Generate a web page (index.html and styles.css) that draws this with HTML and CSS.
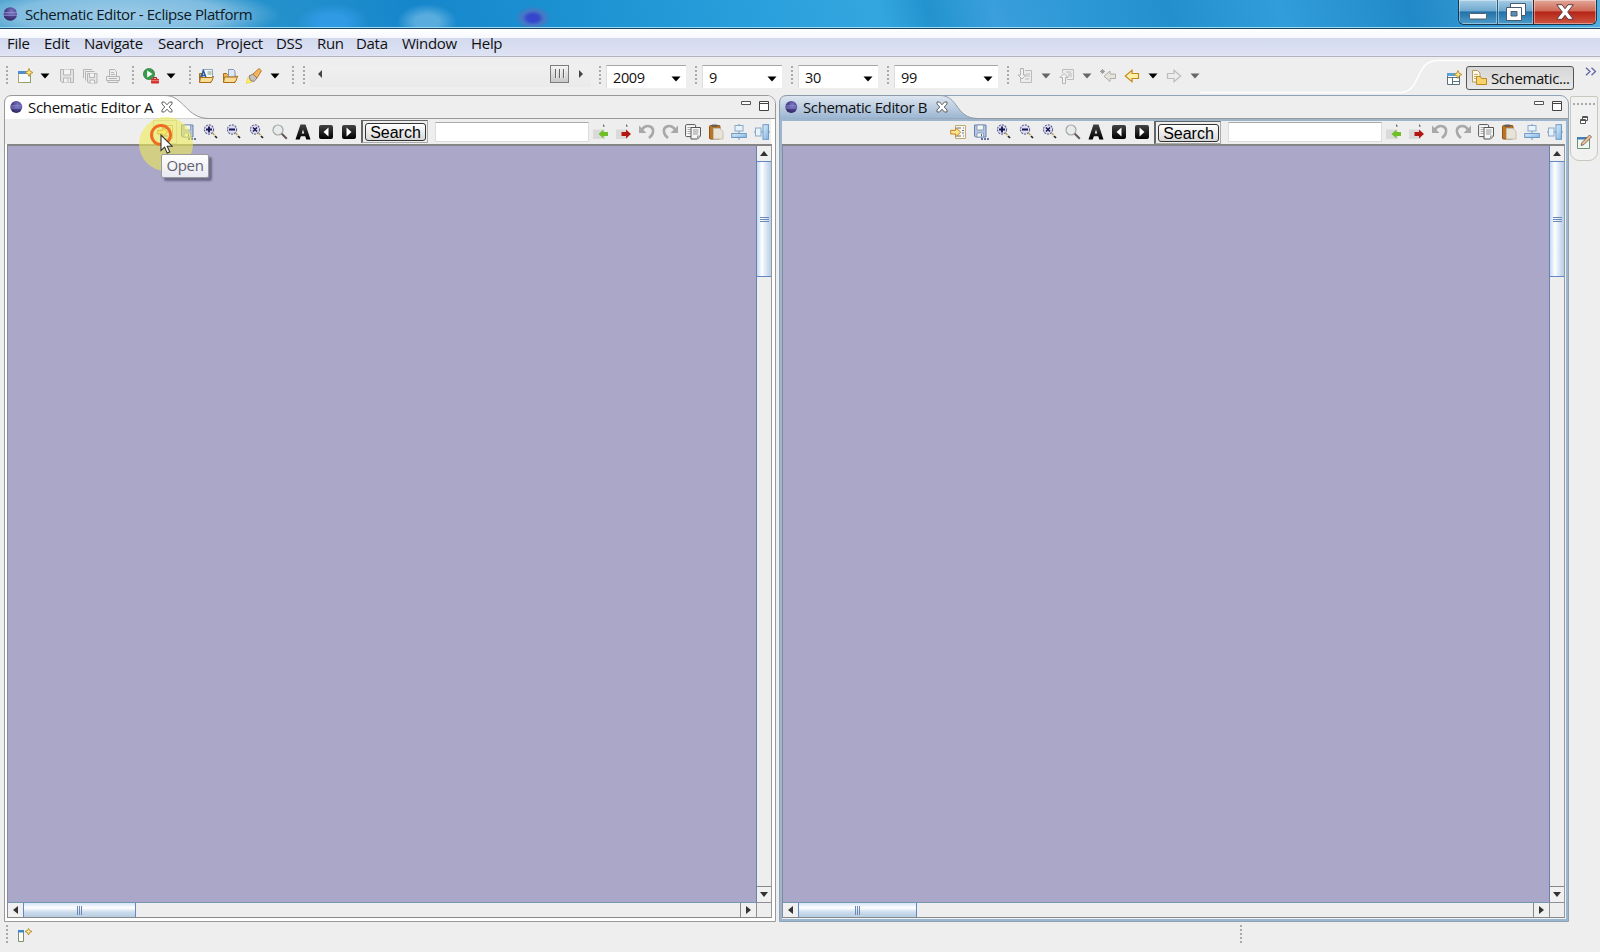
FILE: index.html
```html
<!DOCTYPE html>
<html lang="en">
<head>
<meta charset="utf-8">
<title>Schematic Editor - Eclipse Platform</title>
<link rel="stylesheet" href="styles.css">
</head>
<body>
<svg class="sprite" width="0" height="0">
  <defs>
    <radialGradient id="orb" cx=".6" cy=".3" r=".8"><stop offset="0" stop-color="#7a78c0"/><stop offset=".5" stop-color="#4a428c"/><stop offset="1" stop-color="#2b2158"/></radialGradient>
    <linearGradient id="blk" x1="0" y1="0" x2="0" y2="1"><stop offset="0" stop-color="#444"/><stop offset="1" stop-color="#000"/></linearGradient>
    <linearGradient id="blu" x1="0" y1="0" x2="1" y2="1"><stop offset="0" stop-color="#dff0fc"/><stop offset="1" stop-color="#7fb2e0"/></linearGradient>
  </defs>
  <symbol id="eclipse" viewBox="0 0 16 16"><circle cx="8.300" cy="8" r="6.800" fill="url(#orb)"/><path d="M1 6.800h14.500M1 9.200h14.500" stroke="#a9a8ea" stroke-width=".8"/></symbol>
  <symbol id="caret" viewBox="0 0 10 6"><path d="M.5.5h9L5 5.5z" fill="currentColor"/></symbol>
  <symbol id="new" viewBox="0 0 16 16"><rect x="1.500" y="3.500" width="12" height="11" fill="#f4fafe" stroke="#b5a265"/><path d="M1 3h9v3H1z" fill="#4a90d0"/><path d="M13.500 6.500v8h-8" fill="none" stroke="#8da06a"/><path d="M12 .5l1.200 2.800L16 4.500l-2.800 1.200L12 8.500l-1.200-2.800L8 4.500l2.800-1.200z" fill="#fbe48a" stroke="#b98d1d" stroke-width=".9"/></symbol>
  <symbol id="save-off" viewBox="0 0 16 16"><path d="M1.500 1.500h13v13H3l-1.500-1.500z" fill="#e3e3e3" stroke="#b5b5b5"/><path d="M4.500 1.500v5.500h7V1.500M4.500 14.500v-4.500h7v4.500M9 11v3" fill="#f3f3f3" stroke="#b5b5b5"/></symbol>
  <symbol id="saveall-off" viewBox="0 0 16 16"><path d="M1.500 10V1.500H10M3.500 12.500v-9h9" fill="none" stroke="#b5b5b5"/><path d="M5.500 5.500h9.500v9.500H6.500l-1-1z" fill="#e6e6e6" stroke="#b5b5b5"/><path d="M7.500 5.500v4h5v-4M8 15v-3h4.500v3" fill="#f3f3f3" stroke="#b5b5b5"/></symbol>
  <symbol id="print-off" viewBox="0 0 16 16"><path d="M4.500 8V1.500h5l2 2V8M1.500 8.500h13v4h-13zM3 12.500h10v2H3z" fill="#ededed" stroke="#b5b5b5"/><path d="M6 4.500h3M6 6.500h4M4 10.500h8" stroke="#b5b5b5"/></symbol>
  <symbol id="run" viewBox="0 0 16 16"><circle cx="6" cy="6" r="5.600" fill="#3a9a4b" stroke="#1d6d31" stroke-width=".6"/><path d="M4.200 2.600v6.800L9.500 6z" fill="#fff"/><path d="M10.500 11V9.500h3V11" fill="none" stroke="#a92020"/><rect x="8" y="10.800" width="8" height="4.700" rx=".8" fill="#d22d2a"/><path d="M8 12.700h8" stroke="#f0b0a0" stroke-width=".7"/></symbol>
  <symbol id="open-type" viewBox="0 0 16 16"><path d="M1.500 14V5.500h3l1 1H13v8H2z" fill="#eab65a" stroke="#a86d16"/><path d="M4.500 1.500h10v8h-10z" fill="#f4f8ff" stroke="#8ba4c6"/><path d="M9.500 4h4M9.500 6h4" stroke="#7ba06a"/><path d="M2.500 9.500l3-6.500 2.500 6.500M3.500 7.500h4" stroke="#24589c" stroke-width="1.500" fill="none"/><path d="M1.500 14.500l1-5h11.500l1.500-1.500-1.500 5-2 1.500z" fill="#fbdc94" stroke="#a86d16"/></symbol>
  <symbol id="open-res" viewBox="0 0 16 16"><path d="M1.500 14V5.500h3l1 1H13v8H2z" fill="#eab65a" stroke="#a86d16"/><path d="M6.500 1.500h5l1.500 1.500v6H6.500z" fill="#dfe8f6" stroke="#8795b3"/><path d="M1.500 14.500l1-5.500h11.500l1.500-1-1.500 5-2 1.500z" fill="#fbdc94" stroke="#a86d16"/></symbol>
  <symbol id="torch" viewBox="0 0 16 16"><path d="M0 15.500l2-6 4.500 4.500z" fill="#fff15c" stroke="#e9cf49" stroke-width=".7"/><path d="M3 8l4-2 4 4-3 3.500-3.500-1z" fill="#c8c0bd" stroke="#827477" stroke-width=".9"/><path d="M7 6l6-5.500 2.500 2.200L11 10z" fill="#f1b45f" stroke="#b57428" stroke-width=".9"/></symbol>
  <symbol id="step-in" viewBox="0 0 16 16"><path d="M8 2.500h6.500v12h-11V10" fill="#ececec" stroke="#bcbcbc"/><path d="M9 6h4M9 8h4M8 11h4" stroke="#bcbcbc"/><path d="M3.500.5h3v6.500H9l-4 4-4-4h2.500z" fill="#f1f1f1" stroke="#b3b3b3"/></symbol>
  <symbol id="step-out" viewBox="0 0 16 16"><path d="M3.500 5V1.500h11v10H8" fill="#ececec" stroke="#bcbcbc"/><path d="M7 4h5M9 6h4M9 8h4" stroke="#bcbcbc"/><path d="M3.500 15.500h3v-6H9l-4-4-4 4h2.500z" fill="#f1f1f1" stroke="#b3b3b3"/></symbol>
  <symbol id="last-edit" viewBox="0 0 16 16"><path d="M15.500 6H10V3L4 8.300l6 5.200v-3h5.500z" fill="#e4e4dc" stroke="#b0b0a8"/><path d="M2.500 1v5M0 3.500h5M.8 1.800l3.400 3.400M4.200 1.800L.8 5.200" stroke="#969696" stroke-width=".9"/></symbol>
  <symbol id="back" viewBox="0 0 16 16"><path d="M14.500 5.500H8V2.300L1.300 8 8 13.700v-3.200h6.500z" fill="#fff0a8" stroke="#c28b20" stroke-width="1.200"/></symbol>
  <symbol id="fwd-off" viewBox="0 0 16 16"><path d="M1.500 5.500H8V2.300L14.700 8 8 13.700v-3.200H1.500z" fill="#ececec" stroke="#bcbcbc" stroke-width="1.200"/></symbol>
  <symbol id="persp" viewBox="0 0 16 16"><path d="M1.500 3.500h12v11h-12zM1.500 7.500h12M6.500 7.500v7M6.500 11.500h7" fill="#fff" stroke="#58717c"/><path d="M1 3h9v3H1z" fill="#5aa2d8"/><path d="M12 .5l1.200 2.800L16 4.500l-2.800 1.200L12 8.500l-1.200-2.800L8 4.500l2.800-1.200z" fill="#fbe48a" stroke="#b98d1d" stroke-width=".9"/></symbol>
  <symbol id="docs" viewBox="0 0 16 16"><path d="M1.500.5h5L9 3v9H1.500z" fill="#fdf8e8" stroke="#b79a5d"/><path d="M3 4.500h4M3 6.500h3M3 8.500h3" stroke="#c8b27c"/><path d="M5.500 14.500v-8h4l1 2h5v6z" fill="#f9d46c" stroke="#bd8a24"/></symbol>
  <symbol id="open" viewBox="0 0 16 16"><path d="M5.500 1.500h10v13h-10z" fill="#fbf7ea" stroke="#c2a874"/><path d="M7 4h4M13 4h1M12 6.500h2M12 9h2M7 12h4M13 12h1" stroke="#5674a6" stroke-width="1.200"/><path d="M.7 6.300h5V3.500l5 4.700-5 4.700V10h-5z" fill="#fde48e" stroke="#bf8420"/></symbol>
  <symbol id="saveas" viewBox="0 0 16 16"><path d="M1.500 1h11.500v12H2.500l-1-1z" fill="#b5c7e0" stroke="#6780ac"/><path d="M4 1h6.500v5H4zM4 13V9h6.500v4z" fill="#f3f6ef" stroke="#7e94ba" stroke-width=".8"/><path d="M8.500 10v2.500" stroke="#556e98"/><path d="M8 15h2M11 15h2M14 15h2" stroke="#39478c" stroke-width="1.500"/></symbol>
  <symbol id="zbase" viewBox="0 0 16 16"><circle cx="6" cy="5.500" r="4.600" fill="#dcdcf4" stroke="#62628e" stroke-width="1.100" stroke-dasharray="2 1"/><path d="M9.500 9l2 2" stroke="#bba85b" stroke-width="1.700"/><path d="M12 12l2 2" stroke="#222" stroke-width="1.700"/></symbol>
  <symbol id="zin" viewBox="0 0 16 16"><use href="#zbase"/><path d="M3 5.500h6M6 2.500v6" stroke="#161650" stroke-width="1.800"/></symbol>
  <symbol id="zout" viewBox="0 0 16 16"><use href="#zbase"/><path d="M3 5.500h6" stroke="#161650" stroke-width="2"/></symbol>
  <symbol id="zfit" viewBox="0 0 16 16"><use href="#zbase"/><path d="M4 3.500l4 4M8 3.500l-4 4" stroke="#161650" stroke-width="1.500"/></symbol>
  <symbol id="mag" viewBox="0 0 16 16"><circle cx="6" cy="6" r="5" fill="#e6ecec" stroke="#a4a6a6" stroke-width="1.200"/><path d="M9.800 9.800l5 5" stroke="#635854" stroke-width="2"/></symbol>
  <symbol id="bigA" viewBox="0 0 16 16"><path d="M.5 15.500h4.200l1.200-3.200h4.300l1.100 3.200h4.200L10.600.5H5.400zM6.800 9.600L8 5.500l1.200 4.100z" fill="url(#blk)" fill-rule="evenodd"/></symbol>
  <symbol id="prev" viewBox="0 0 16 16"><rect x="1" y="1" width="14" height="14" rx="2" fill="url(#blk)"/><path d="M10.500 3.500v9L5.500 8z" fill="#fff"/></symbol>
  <symbol id="next" viewBox="0 0 16 16"><rect x="1" y="1" width="14" height="14" rx="2" fill="url(#blk)"/><path d="M5.500 3.500v9l5-4.500z" fill="#fff"/></symbol>
  <symbol id="import" viewBox="0 0 16 16"><path d="M0 5.500h10l2 1.500v8H0z" fill="#dadada"/><path d="M10 0l2 2.500h-2z" fill="#555"/><path d="M15 8v4h-4.500v2.500L5.500 10l5-4.500V8z" fill="#6fc026"/></symbol>
  <symbol id="export" viewBox="0 0 16 16"><path d="M0 5.500h10l2 1.500v8H0z" fill="#dadada"/><path d="M10 0l2 2.500h-2z" fill="#555"/><path d="M5.500 8v4H10v2.500l5-4.500-5-4.500V8z" fill="#b31512"/></symbol>
  <symbol id="undo" viewBox="0 0 16 16"><path d="M3 5.500C7-.5 15 2 14 8c-.3 2.500-2 4.500-4 6" fill="none" stroke="#a8a8a8" stroke-width="2.500"/><path d="M0 1.500v7.500h7.500z" fill="#a8a8a8"/></symbol>
  <symbol id="redo" viewBox="0 0 16 16"><path d="M13 5.500C9-.5 1 2 2 8c.3 2.500 2 4.500 4 6" fill="none" stroke="#a8a8a8" stroke-width="2.500"/><path d="M16 1.500v7.500H8.500z" fill="#a8a8a8"/></symbol>
  <symbol id="copy" viewBox="0 0 16 16"><rect x=".6" y=".6" width="10" height="12" rx="1" fill="#fafafa" stroke="#555"/><path d="M2.500 3.500h6M2.500 5.500h3M2.500 7.500h3M2.500 9.500h3" stroke="#aaa"/><path d="M6 3.500h9.500v8.500l-3 3H6z" fill="#f6f6f6" stroke="#555"/><path d="M8 6h5.500M8 8h5.500M8 10h5M12.500 15v-3h3" stroke="#999" fill="none"/></symbol>
  <symbol id="paste" viewBox="0 0 16 16"><rect x="1.500" y="1.500" width="10.500" height="13.500" rx="1" fill="#bd7423" stroke="#8b5519"/><rect x="3.500" y=".5" width="6" height="2.500" rx="1" fill="#655e58"/><path d="M5.500 4.500h6.500l3 3V15h-9.500z" fill="#e9e4da" stroke="#c9bfae"/></symbol>
  <symbol id="al-v" viewBox="0 0 16 16"><path d="M8 0v16" stroke="#7895ae"/><rect x="4" y="1.500" width="8" height="5.500" fill="#e6f2fc" stroke="#89a9c8"/><rect x=".7" y="9.500" width="14.600" height="4" fill="url(#blu)" stroke="#6c9ac5"/></symbol>
  <symbol id="al-h" viewBox="0 0 16 16"><path d="M0 8h16" stroke="#7895ae"/><rect x="1.500" y="4" width="5.500" height="8" fill="#e6f2fc" stroke="#89a9c8"/><rect x="9" y=".7" width="5.500" height="14.600" fill="url(#blu)" stroke="#6c9ac5"/></symbol>
  <symbol id="close" viewBox="0 0 12 12"><path d="M1 1h2.500L6 3.800 8.500 1H11v2L8.200 6 11 9v2H8.500L6 8.200 3.500 11H1V9l2.800-3L1 3z" fill="#fff" stroke="#505050" stroke-width=".9"/></symbol>
  <symbol id="min" viewBox="0 0 10 4"><path d="M.5.5h9v3h-9z" fill="#fff" stroke="#555"/></symbol>
  <symbol id="max" viewBox="0 0 10 10"><path d="M.5.5h9v9h-9zM.5 2.500h9" fill="#fff" stroke="#444"/></symbol>
  <symbol id="restore" viewBox="0 0 8 8"><path d="M2.500.5h5v4h-5zM2.500 1.500h5M.5 3.500h5v4h-5zM.5 4.500h5" fill="#fff" stroke="#555"/></symbol>
  <symbol id="edit" viewBox="0 0 16 16"><path d="M1.500 3.500h12v11h-12z" fill="#eef7f5" stroke="#71916c"/><path d="M1 3h10v2.500H1z" fill="#437fb5"/><path d="M5 11.500l1-3L13.500 1l2 2L8 10.500z" fill="#e9c29b" stroke="#74523b" stroke-width=".8"/></symbol>
  <symbol id="fastview" viewBox="0 0 16 16"><path d="M1.500 2.500h5v11h-5z" fill="#fff" stroke="#7a9469"/><path d="M1 2h6v2.500H1z" fill="#3f86cf"/><path d="M11.500.5l1 2 2.500 1-2.500 1-1 2.500-1-2.500-2.500-1 2.500-1z" fill="#fdf0b0" stroke="#b98d1d"/></symbol>
</svg>

<div class="window">
  <header class="titlebar">
    <svg class="i16"><use href="#eclipse"/></svg>
    <span class="title">Schematic Editor - Eclipse Platform</span>
    <div class="winbtns">
      <span class="wb wb-min"><svg width="18" height="7" viewBox="0 0 18 7"><rect x=".5" y=".5" width="17" height="5.500" rx="1" fill="#fff" stroke="#526271"/></svg></span>
      <span class="wb wb-max"><svg width="20" height="18" viewBox="0 0 20 18"><path d="M4.500.5h15v12h-15z" fill="#fff" stroke="#4a5b6d"/><path d="M.5 4.500h15v13H.5z" fill="#fff" stroke="#4a5b6d"/><path d="M5 8.500h6v4.500H5z" fill="#5a8fb8" stroke="#4a5b6d"/></svg></span>
      <span class="wb wb-close"><svg width="18" height="16" viewBox="0 0 18 16"><path d="M.7.7H6L9 4.700 12 .7h5.300L11.700 8l5.600 7.300H12L9 11.300l-3 4H.7L6.300 8z" fill="#fff" stroke="#5f3b42"/></svg></span>
    </div>
  </header>

  <nav class="menubar">
    <span class="m-file">File</span><span class="m-edit">Edit</span><span class="m-nav">Navigate</span><span class="m-search">Search</span><span class="m-project">Project</span><span class="m-dss">DSS</span><span class="m-run">Run</span><span class="m-data">Data</span><span class="m-window">Window</span><span class="m-help">Help</span>
  </nav>

  <div class="coolbar">
    <i class="grip g-first"></i>
    <div class="group file"><svg class="i16"><use href="#new"/></svg><svg class="caret"><use href="#caret"/></svg><svg class="i16"><use href="#save-off"/></svg><svg class="i16"><use href="#saveall-off"/></svg><svg class="i16"><use href="#print-off"/></svg></div>
    <i class="grip g-run"></i>
    <div class="group"><svg class="i16"><use href="#run"/></svg><svg class="caret"><use href="#caret"/></svg></div>
    <i class="grip g-open"></i>
    <div class="group wide"><svg class="i16"><use href="#open-type"/></svg><svg class="i16"><use href="#open-res"/></svg><svg class="i16"><use href="#torch"/></svg><svg class="caret"><use href="#caret"/></svg></div>
    <i class="grip g-a"></i><i class="grip g-b"></i>
    <div class="slider"><span class="tri-l"></span><span class="knob"><i></i><i></i><i></i></span><span class="tri-r"></span></div>
    <i class="grip g-c"></i><div class="combo">2009<svg class="caret"><use href="#caret"/></svg></div>
    <i class="grip g-c"></i><div class="combo">9<svg class="caret"><use href="#caret"/></svg></div>
    <i class="grip g-c"></i><div class="combo">30<svg class="caret"><use href="#caret"/></svg></div>
    <i class="grip g-c"></i><div class="combo combo-wide">99<svg class="caret"><use href="#caret"/></svg></div>
    <i class="grip g-c"></i>
    <div class="group nav"><svg class="i16"><use href="#step-in"/></svg><svg class="caret off"><use href="#caret"/></svg><svg class="i16"><use href="#step-out"/></svg><svg class="caret off"><use href="#caret"/></svg><svg class="i16"><use href="#last-edit"/></svg><svg class="i16"><use href="#back"/></svg><svg class="caret"><use href="#caret"/></svg><svg class="i16"><use href="#fwd-off"/></svg><svg class="caret off"><use href="#caret"/></svg></div>
    <div class="perspectives">
      <svg class="swoop" width="400" height="38" viewBox="0 0 400 38"><path d="M0 35.500h200c22 0 14-32 38-32h162" fill="none" stroke="#fff" stroke-width="1.500"/></svg>
      <svg class="i16 p-new"><use href="#persp"/></svg>
      <div class="p-btn"><svg class="i16"><use href="#docs"/></svg><span>Schematic...</span></div>
      <svg class="more" width="12" height="9" viewBox="0 0 12 9"><path d="M1 .8l4 3.700-4 3.700M6.500.8l4 3.700-4 3.700" fill="none" stroke="#6363aa" stroke-width="1.300"/></svg>
    </div>
  </div>

  <main class="work">
    <section class="panel panel-a">
      <div class="tabs">
        <svg class="tabshape" width="210" height="24" viewBox="0 0 210 24"><path d="M.5 24V8Q.500 .500 8 .500H161C180 .500 182 23.500 205 23.500z" fill="#fff"/><path d="M.5 24V8Q.500 .500 8 .500H161C180 .500 182 23.500 205 23.500" fill="none" stroke="#999"/></svg>
        <svg class="tabicon"><use href="#eclipse"/></svg><span class="tabname">Schematic Editor A</span><svg class="x"><use href="#close"/></svg>
        <span class="vb"><svg class="vmin"><use href="#min"/></svg><svg class="vmax"><use href="#max"/></svg></span>
      </div>
      <div class="tools">
        <svg class="i16 hot"><use href="#open"/></svg><svg class="i16"><use href="#saveas"/></svg><svg class="i16"><use href="#zin"/></svg><svg class="i16"><use href="#zout"/></svg><svg class="i16"><use href="#zfit"/></svg><svg class="i16"><use href="#mag"/></svg><svg class="i16"><use href="#bigA"/></svg><svg class="i16"><use href="#prev"/></svg><svg class="i16"><use href="#next"/></svg>
        <div class="searchbox"><button class="search">Search</button></div><input class="query" type="text" aria-label="Search">
        <svg class="i16"><use href="#import"/></svg><svg class="i16"><use href="#export"/></svg><svg class="i16"><use href="#undo"/></svg><svg class="i16"><use href="#redo"/></svg><svg class="i16"><use href="#copy"/></svg><svg class="i16"><use href="#paste"/></svg><svg class="i16"><use href="#al-v"/></svg><svg class="i16"><use href="#al-h"/></svg>
      </div>
      <div class="scroller">
        <div class="canvas"></div>
        <div class="vbar"><span class="sb up"><b></b></span><span class="vthumb"><i></i><i></i><i></i></span><span class="sb down"><b></b></span></div>
        <div class="hbar"><span class="sb left"><b></b></span><span class="hthumb"><i></i><i></i><i></i></span><span class="sb right"><b></b></span></div>
        <div class="corner"></div>
      </div>
    </section>

    <section class="panel panel-b">
      <div class="tabs">
        <svg class="tabshape" width="210" height="24" viewBox="0 0 210 24"><defs><linearGradient id="tb" x1="0" y1="0" x2="0" y2="1"><stop offset="0" stop-color="#dfe7f1"/><stop offset="1" stop-color="#99b4d1"/></linearGradient></defs><path d="M.5 24V8Q.500 .500 8 .500H161C180 .500 176 23.500 199 23.500z" fill="url(#tb)"/><path d="M.5 24V8Q.500 .500 8 .500H161C180 .500 176 23.500 199 23.500" fill="none" stroke="#8d9aa8"/></svg>
        <svg class="tabicon"><use href="#eclipse"/></svg><span class="tabname">Schematic Editor B</span><svg class="x"><use href="#close"/></svg>
        <span class="vb"><svg class="vmin"><use href="#min"/></svg><svg class="vmax"><use href="#max"/></svg></span>
      </div>
      <div class="tools">
        <svg class="i16"><use href="#open"/></svg><svg class="i16"><use href="#saveas"/></svg><svg class="i16"><use href="#zin"/></svg><svg class="i16"><use href="#zout"/></svg><svg class="i16"><use href="#zfit"/></svg><svg class="i16"><use href="#mag"/></svg><svg class="i16"><use href="#bigA"/></svg><svg class="i16"><use href="#prev"/></svg><svg class="i16"><use href="#next"/></svg>
        <div class="searchbox"><button class="search">Search</button></div><input class="query" type="text" aria-label="Search">
        <svg class="i16"><use href="#import"/></svg><svg class="i16"><use href="#export"/></svg><svg class="i16"><use href="#undo"/></svg><svg class="i16"><use href="#redo"/></svg><svg class="i16"><use href="#copy"/></svg><svg class="i16"><use href="#paste"/></svg><svg class="i16"><use href="#al-v"/></svg><svg class="i16"><use href="#al-h"/></svg>
      </div>
      <div class="scroller">
        <div class="canvas"></div>
        <div class="vbar"><span class="sb up"><b></b></span><span class="vthumb"><i></i><i></i><i></i></span><span class="sb down"><b></b></span></div>
        <div class="hbar"><span class="sb left"><b></b></span><span class="hthumb"><i></i><i></i><i></i></span><span class="sb right"><b></b></span></div>
        <div class="corner"></div>
      </div>
    </section>

    <aside class="trim"><span class="dots"></span><svg class="t-restore"><use href="#restore"/></svg><svg class="i16"><use href="#edit"/></svg></aside>
  </main>

  <footer class="status"><i class="grip"></i><svg class="i16"><use href="#fastview"/></svg><i class="grip s-grip"></i></footer>
</div>

<div class="halo"></div>
<div class="tooltip">Open</div>
<div class="ring"></div>
<svg class="cursor" width="14" height="21" viewBox="0 0 14 21"><path d="M1 1v15.500l3.600-3.400 2.600 6 2.600-1.200-2.600-5.700h4.900z" fill="#fff" stroke="#333" stroke-width="1.100"/></svg>
</body>
</html>
```
FILE: styles.css
```css
* { box-sizing: border-box; }
body { margin: 0; width: 1600px; height: 952px; overflow: hidden; background: #eee; font: 15px "Open Sans", "Noto Sans", sans-serif; color: #111; }
.sprite { position: absolute; }
.window { display: flex; flex-direction: column; height: 952px; }
svg { flex: none; display: block; }
i, b { display: block; flex: none; }
.i16 { width: 16px; height: 16px; }
.caret { width: 10px; height: 6px; color: #000; }
.caret.off { color: #666; }

.titlebar { height: 29px; flex: none; display: flex; align-items: center; padding-left: 2px; border-bottom: 1px solid #1d4663; box-shadow: inset 0 -1px #9bdcf3;
  background:
    radial-gradient(ellipse 160px 30px at 120px 15px, rgba(175,212,235,.85), rgba(160,205,233,.7) 65%, transparent),
    radial-gradient(ellipse 18px 12px at 533px 18px, #3446cc 30%, rgba(90,110,190,.7) 60%, transparent),
    radial-gradient(ellipse 30px 18px at 427px 22px, rgba(110,185,228,.75) 40%, transparent),
    radial-gradient(ellipse 36px 18px at 333px 22px, rgba(55,160,240,.7) 40%, transparent),
    linear-gradient(75deg, #3d9acb 0, #2290cc 19%, #1686cb 26%, #1c92d2 36%, #2aa0dc 48%, #34a6df 55%, #2293ce 58%, #3a9fdc 62%, #2c97d5 68%, #2390cd 73%, #329ddb 80%, #2189c8 88%, #53b0e0 100%); }
.title { margin: 0 0 0 7px; letter-spacing: -.43px; color: #0b1a26; white-space: nowrap; }
.winbtns { display: flex; align-self: flex-start; margin-left: auto; margin-right: 3px; border: 1px solid #17384f; border-top: 0; border-radius: 0 0 6px 6px; overflow: hidden; height: 25px; }
.wb { display: flex; align-items: center; justify-content: center; height: 24px; box-shadow: inset 0 0 0 1px rgba(255,255,255,.4); background: linear-gradient(#a5cde6, #6fa9ce 45%, #2272aa 50%, #4c9cca); }
.wb-min { width: 38px; padding-top: 8px; }
.wb-max { width: 36px; border-left: 1px solid #2b5b7b; }
.wb-close { width: 63px; border-left: 1px solid #521b1b; background: linear-gradient(#e2a798, #cf6a57 45%, #b52417 50%, #cf5540); }

.menubar { height: 28px; flex: none; display: flex; align-items: center; padding: 1px 0 0 7px; border-bottom: 1px solid #b3b3bd; background: linear-gradient(#fff 0, #f6f8fd 9px, #d3daee 9px, #dde2f3 26px, #e8ebf7); white-space: nowrap; letter-spacing: -.3px; }
.m-file { width: 37px; } .m-edit { width: 40px; } .m-nav { width: 74px; } .m-search { width: 58px; } .m-project { width: 60px; } .m-dss { width: 41px; } .m-run { width: 39px; } .m-data { width: 46px; } .m-window { width: 69px; }

.coolbar { height: 38px; flex: none; display: flex; align-items: center; background: #eee; }
.grip { width: 3px; height: 21px; background: repeating-linear-gradient(#aaa 0 2px, transparent 2px 4px); background-size: 2px 20px; background-repeat: no-repeat; }
.group { display: flex; align-items: center; gap: 7px; }
.group.wide { gap: 8px; }
.file .caret { margin-right: 2px; }
.g-first { margin: 0 8px 0 6px; } .g-run { margin: 0 8px 0 11px; } .g-open { margin: 0 6px 0 13px; } .g-a { margin-left: 12px; } .g-b { margin: 0 4px 0 8px; }
.g-c { margin: 0 4px 0 8px; }
.slider { width: 281px; height: 22px; display: flex; align-items: center; padding: 0 8px 4px 8px; background: linear-gradient(#f0f0f0, #eaeaea); }
.tri-l { border: 4px solid transparent; border-left: 0; border-right: 4px solid #444; }
.tri-r { border: 4px solid transparent; border-right: 0; border-left: 4px solid #444; margin-left: 10px; }
.knob { margin-left: auto; width: 19px; height: 18px; display: flex; justify-content: center; gap: 2px; padding-top: 3px; border: 1px solid #7c7c7c; background: linear-gradient(#f5f5f5, #c8c8c8); }
.knob i { width: 2px; height: 9px; background: #666; border-right: 1px solid #eee; }
.combo { width: 80px; height: 23px; display: flex; align-items: center; justify-content: space-between; padding: 2px 5px 0 6px; background: #fff; border-top: 1px solid #a5a5a5; border-left: 1px solid #ddd; font-size: 14.500px; letter-spacing: -.4px; margin-right: 1px; }
.combo .caret { margin-top: 2px; }
.combo-wide { width: 104px; }
.nav { gap: 8px; margin-left: 3px; }
.nav .caret:nth-child(4) { margin-left: -1px; }
.perspectives { position: relative; display: flex; align-items: center; margin-left: auto; height: 38px; padding-top: 3px; }
.swoop { position: absolute; right: 0; top: 0; }
.p-new, .p-btn, .more { position: relative; }
.p-btn { display: flex; align-items: center; gap: 4px; width: 108px; height: 24px; margin: 0 11px 0 4px; padding: 0 0 0 4px; border: 1px solid #555; border-radius: 3px; background: linear-gradient(#d6d6d6, #e8e8e8); letter-spacing: -.4px; white-space: nowrap; }
.more { margin: -12px 3px 0 0; }

.work { height: 827px; flex: none; display: flex; }
.panel { display: flex; flex-direction: column; height: 827px; border: 1px solid #999; border-radius: 9px 9px 0 0; background: #fff; }
.panel-a { width: 772px; margin-left: 4px; }
.panel-b { width: 790px; margin-left: 3px; background: #9db6cf; border-color: #8fa3b6; }
.tabs { position: relative; height: 23px; flex: none; display: flex; align-items: center; background: #eee; border-radius: 8px 8px 0 0; border-bottom: 1px solid #999; }
.tabshape { position: absolute; left: -1px; top: -1px; }
.tabicon { position: relative; width: 14px; height: 14px; margin-left: 4px; }
.tabname { position: relative; width: 132px; margin-left: 5px; white-space: nowrap; letter-spacing: -.3px; }
.x { position: relative; width: 12px; height: 12px; margin-left: 1px; }
.vb { display: flex; gap: 8px; margin-left: auto; margin-right: 6px; height: 12px; }
.vmin { width: 10px; height: 4px; }
.vmax { width: 10px; height: 10px; }
.tools { height: 25px; flex: none; display: flex; align-items: center; gap: 7px; background: #eee; padding: 0 0 0 152px; margin-right: 4px; }
.panel-b .tools { padding-left: 168px; margin: 2px 2px 0; height: 23px; padding-bottom: 1px; }
.panel-b .tabname { letter-spacing: -.38px; }
.hot { outline: 1px solid #ccc; outline-offset: 3px; }
.searchbox { width: 67px; height: 23px; margin-left: -3px; padding: 2px; border: 1px solid #aaa; border-top-color: #666; border-left: 2px solid #666; }
.search { display: block; width: 61px; height: 18px; padding: 0; border: 1px solid #333; border-radius: 3px; background: linear-gradient(#fff, #d8d8d8); font: 16px/17px "Liberation Sans", sans-serif; color: #000; }
.query { width: 154px; height: 20px; border: 1px solid #ddd; border-top-color: #aaa; background: #fff; padding: 0; margin-right: -3px; }
.scroller { display: grid; flex: none; grid-template-rows: 756px 15px; border-top: 2px solid #858585; border-left: 1px solid #858a96; border-right: 1px solid #999; border-bottom: 1px solid #888; height: 774px; background: #eee; }
.panel-a .scroller { grid-template-columns: 748px 15px; width: 765px; margin-left: 2px; }
.panel-b .scroller { grid-template-columns: 766px 15px; width: 783px; margin-left: 2px; box-shadow: 0 0 0 1px #edf2f7; clip-path: inset(0 -1px -1px 0); }
.canvas { background: #aaa7c8; }
.vbar { display: flex; flex-direction: column; border-left: 1px solid #6683b0; height: 756px; }
.hbar { display: flex; border-top: 1px solid #7397b3; }
.corner { border-left: 1px solid #8f8f9c; border-top: 1px solid #8f8f9c; }
.sb { display: flex; flex: none; align-items: center; justify-content: center; background: #f0f0f0; }
.sb b { border: 4px solid transparent; }
.up { height: 15px; } .up b { border-top: 0; border-bottom: 5px solid #333; }
.down { height: 16px; margin-top: auto; border-top: 1px solid #888; } .down b { border-bottom: 0; border-top: 5px solid #333; }
.left { width: 15px; } .left b { border-left: 0; border-right: 5px solid #333; }
.right { width: 16px; margin-left: auto; border-left: 1px solid #888; } .right b { border-right: 0; border-left: 5px solid #333; }
.vthumb { display: flex; flex-direction: column; align-items: center; justify-content: center; gap: 1px; height: 116px; border: solid #6288c6; border-width: 1px 0; background: linear-gradient(90deg, #c3d8ef, #fff 35%, #dfeaf6 60%, #b5cde8); }
.vthumb i { width: 9px; height: 1px; background: #6c88b4; }
.hthumb { display: flex; align-items: center; justify-content: center; gap: 1px; width: 113px; border: solid #6288c6; border-width: 0 1px; background: linear-gradient(#d6e5f6, #fff 35%, #ccdcec 65%, #b5cde2); }
.hthumb i { width: 1px; height: 9px; background: #6c88b4; }
.panel-b .hthumb { width: 119px; }
.trim { width: 28px; height: 65px; margin: 1px 0 0 1px; border: 1px solid #c8c8bd; border-radius: 2px 2px 9px 9px; display: flex; flex-direction: column; align-items: center; background: #f1f1f1; }
.dots { width: 22px; height: 2px; margin: 6px 0 11px; background: repeating-linear-gradient(90deg, #aaa 0 2px, transparent 2px 4px); }
.t-restore { width: 8px; height: 8px; margin-bottom: 10px; }
.status { flex: 1; display: flex; align-items: center; padding: 0 0 3px 6px; }
.status .i16 { margin-left: 8px; }
.s-grip { margin-left: 1207px; }

.halo { position: absolute; left: 139px; top: 117px; width: 54px; height: 54px; border-radius: 50%; background: rgba(240,236,82,.58); }
.ring { position: absolute; left: 150px; top: 124px; width: 22px; height: 22px; border: 3px solid #ef6d20; border-radius: 50%; }
.cursor { position: absolute; left: 160px; top: 134px; }
.tooltip { position: absolute; left: 161px; top: 154px; width: 48px; height: 24px; border: 1px solid #9a9a9a; border-radius: 2px; background: linear-gradient(#fff, #e8e9f2); box-shadow: 3px 3px 2px rgba(50,50,80,.5); color: #63636e; text-align: center; line-height: 21px; letter-spacing: -.4px; }
```
